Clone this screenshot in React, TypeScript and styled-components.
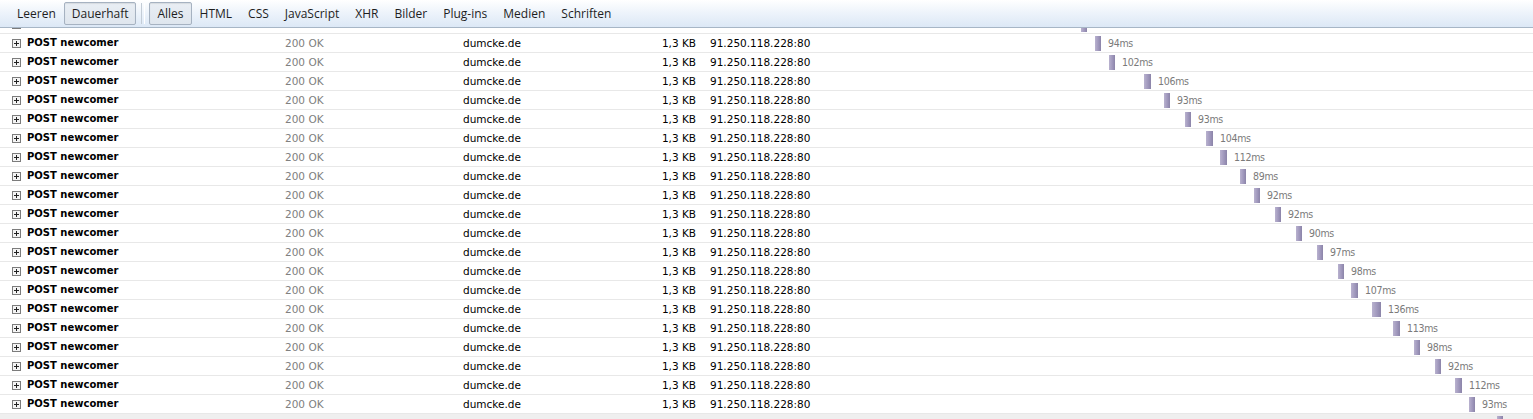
import React from 'react'
import styled, { createGlobalStyle } from 'styled-components'

const GlobalStyle = createGlobalStyle`
  html, body {
    margin: 0;
    padding: 0;
    background: #ffffff;
    overflow: hidden;
  }
  body {
    width: 1533px;
    height: 419px;
  }
`;

const Panel = styled.div`
  display: flex;
  flex-direction: column;
  width: 1533px;
  height: 419px;
  background: #ffffff;
`;

const Toolbar = styled.div`
  display: flex;
  align-items: center;
  height: 28px;
  padding-left: 9px;
  box-sizing: border-box;
  background: linear-gradient(to bottom, #ffffff 0%, #eef4fb 45%, #dce8f6 100%);
  border-bottom: 1px solid #a7b6c6;
  flex-shrink: 0;
`;

const ToolButton = styled.div<{ $pressed?: boolean }>`
  display: flex;
  align-items: center;
  height: 23px;
  box-sizing: border-box;
  padding: 0 7px;
  border: 1px solid ${({ $pressed }) => ($pressed ? '#a6b2c1' : 'transparent')};
  border-radius: 2px;
  background: ${({ $pressed }) =>
    $pressed ? 'linear-gradient(to bottom, #e9eef4 0%, #dfe6ee 100%)' : 'transparent'};
  box-shadow: ${({ $pressed }) => ($pressed ? 'inset 0 1px 1px rgba(0,0,0,0.08)' : 'none')};
  font-family: "Open Sans", "Noto Sans", sans-serif;
  font-size: 12px;
  line-height: 16px;
  color: #1e1e1e;
  white-space: nowrap;
`;

const Separator = styled.div`
  width: 2px;
  height: 21px;
  margin: 0 4px 0 5px;
  border-left: 1px solid #c3ccd6;
  border-right: 1px solid #ffffff;
`;

const Viewport = styled.div`
  flex: 1;
  overflow: hidden;
`;

const List = styled.div`
  margin-top: -13px;
`;

const Row = styled.div<{ $hover?: boolean }>`
  display: grid;
  grid-template-columns: 15px 258px 178px 183px 50px 124px 1fr;
  align-items: center;
  height: 19px;
  box-sizing: border-box;
  padding-left: 12px;
  border-bottom: 1px solid #e8e8e8;
  background: ${({ $hover }) => ($hover ? '#efefef' : '#ffffff')};
  font-family: "DejaVu Sans", Verdana, sans-serif;
  font-size: 10.5px;
  line-height: 14px;
  color: #000000;
  white-space: nowrap;
`;

const Name = styled.span`
  font-weight: bold;
  font-size: 10px;
`;

const Status = styled.span`
  color: #808080;
`;

const Size = styled.span`
  text-align: right;
`;

const Address = styled.span`
  padding-left: 14px;
`;

const Timeline = styled.div`
  grid-column: 7;
  display: flex;
  align-items: center;
  height: 18px;
`;

const Bar = styled.div`
  height: 15px;
  margin-top: 1px;
  background: linear-gradient(to right, #b9b2cf 0%, #9e96bb 60%, #8b84a8 100%);
  flex-shrink: 0;
`;

const Duration = styled.span`
  margin-left: 7px;
  color: #7a7a7a;
  font-family: "DejaVu Sans Condensed", "DejaVu Sans", sans-serif;
  font-size: 10.5px;
  letter-spacing: -0.3px;
`;

const PlusIcon: React.FC = () => (
  <svg width="9" height="9" viewBox="0 0 9 9">
    <rect x="0.5" y="0.5" width="8" height="8" fill="#f4f4f4" stroke="#7c7c7c" />
    <path d="M2 4.5h5M4.5 2v5" stroke="#222" strokeWidth="1" />
  </svg>
);

// x-position of each bar in the waterfall, with its duration;
// "partial" rows are the ones scrolled half out of view
const requests: { x: number; ms: number; partial?: 'top' | 'bottom' }[] = [
  { x: 1081, ms: 93, partial: 'top' },
  { x: 1095, ms: 94 },
  { x: 1109, ms: 102 },
  { x: 1144, ms: 106 },
  { x: 1164, ms: 93 },
  { x: 1185, ms: 93 },
  { x: 1206, ms: 104 },
  { x: 1220, ms: 112 },
  { x: 1240, ms: 89 },
  { x: 1254, ms: 92 },
  { x: 1275, ms: 92 },
  { x: 1296, ms: 90 },
  { x: 1317, ms: 97 },
  { x: 1338, ms: 98 },
  { x: 1351, ms: 107 },
  { x: 1372, ms: 136 },
  { x: 1393, ms: 113 },
  { x: 1414, ms: 98 },
  { x: 1435, ms: 92 },
  { x: 1455, ms: 112 },
  { x: 1469, ms: 93 },
  { x: 1497, ms: 95, partial: 'bottom' },
];

const TIMELINE_START = 820;

const filters = ['HTML', 'CSS', 'JavaScript', 'XHR', 'Bilder', 'Plug-ins', 'Medien', 'Schriften'];

const App: React.FC = () => {
  return (
    <Panel>
      <GlobalStyle />
      <Toolbar>
        <ToolButton>Leeren</ToolButton>
        <ToolButton $pressed>Dauerhaft</ToolButton>
        <Separator />
        <ToolButton $pressed>Alles</ToolButton>
        {filters.map((f) => (
          <ToolButton key={f}>{f}</ToolButton>
        ))}
      </Toolbar>
      <Viewport>
        <List>
          {requests.map((r, i) => (
            <Row key={i} $hover={r.partial === 'bottom'}>
              {r.partial !== 'bottom' && <PlusIcon />}
              {!r.partial && (
                <>
                  <Name>POST newcomer</Name>
                  <Status>200 OK</Status>
                  <span>dumcke.de</span>
                  <Size>1,3 KB</Size>
                  <Address>91.250.118.228:80</Address>
                </>
              )}
              <Timeline style={{ paddingLeft: r.x - TIMELINE_START }}>
                <Bar style={{ width: Math.round(r.ms / 16) }} />
                {!r.partial && <Duration>{r.ms}ms</Duration>}
              </Timeline>
            </Row>
          ))}
        </List>
      </Viewport>
    </Panel>
  );
};

export default App;
